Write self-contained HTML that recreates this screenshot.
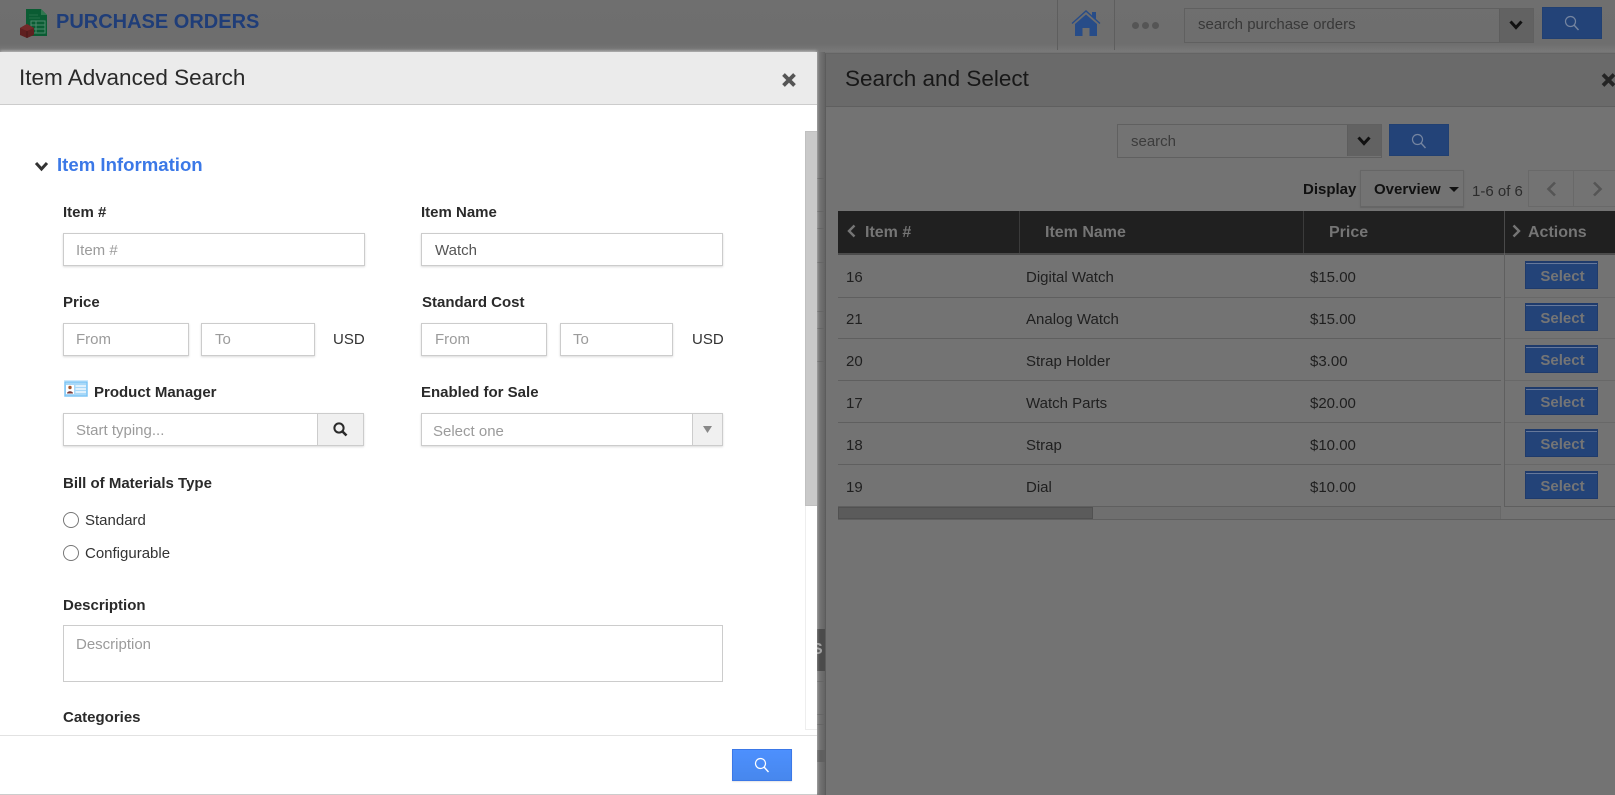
<!DOCTYPE html>
<html><head><meta charset="utf-8"><title>Item Advanced Search</title>
<style>
*{box-sizing:border-box}
html,body{margin:0;padding:0;width:1615px;height:795px;overflow:hidden;background:#737373;font-family:"Liberation Sans",sans-serif}
.a{position:absolute}
.t{position:absolute;white-space:nowrap;line-height:20px;font-size:15px;color:#1f1f1f}
.l{font-weight:bold;color:#2a2a2a}
.p{color:#9b9b9b;font-size:15px}
.i{position:absolute;background:#fff;border:1px solid #ccc;box-shadow:0 1px 2px rgba(0,0,0,.15)}
.d{position:absolute;border:1px solid #606060}
.btn{position:absolute;background:#234378;border:1px solid #214072}
.sel{position:absolute;left:1525px;width:73px;height:28px;background:#234378;border:1px solid #1f3b6c;box-shadow:inset 0 1px 0 #1f3b6c,inset 0 2px 0 #66789a;color:#757575;font:bold 15px/30px "Liberation Sans",sans-serif;text-align:center;padding-left:2px}
.ln{position:absolute;height:1px;background:#5f5f5f}
.h{position:absolute;white-space:nowrap;color:#757575;font:bold 16px/20px "Liberation Sans",sans-serif}
.r{position:absolute;width:16px;height:16px;border:1px solid #777;border-radius:50%;background:#fff}
svg{position:absolute;overflow:visible}
</style></head><body>

<!-- top bar -->
<div class="a" style="left:0;top:0;width:1615px;height:52px;background:linear-gradient(#6f6f6f 0,#6e6e6e 44px,#787878 51px)"></div>
<svg style="left:20px;top:9px" width="28" height="29" viewBox="0 0 28 29">
<path d="M6 0H21L27 6V27H6Z" fill="#0a5c33"/><path d="M21 0L27 6H21Z" fill="#30774f"/>
<path d="M9 9H20M9 6H18" stroke="#277048" stroke-width="1"/>
<path d="M11 12H25V24H11ZM11 16H25M11 20H25M16 12V24" stroke="#4f8a6d" stroke-width="1" fill="none"/>
<path d="M7 15L14 19V26L7 29L0 26V19Z" fill="#5f2020"/><path d="M0 19L7 22L14 19L7 15Z" fill="#722929"/><path d="M7 22V29" stroke="#471717"/>
</svg>
<div class="t" style="left:56px;top:12px;font:bold 20px/20px 'Liberation Sans',sans-serif;color:#1f3d78">PURCHASE ORDERS</div>
<div class="a" style="left:1057px;top:0;width:1px;height:50px;background:#5e5e5e"></div>
<div class="a" style="left:1114px;top:0;width:1px;height:50px;background:#5e5e5e"></div>
<svg style="left:1072px;top:10px" width="28" height="27" viewBox="0 0 28 27">
<path d="M0 13.5L14 1L28 13.5" fill="none" stroke="#274c88" stroke-width="1.4"/>
<path d="M20 2H24V9L20 6Z" fill="#274c88"/>
<path d="M3 14L14 4.5L25 14V26H17.5V18H10.5V26H3Z" fill="#274c88"/></svg>
<div class="a" style="left:1132px;top:22px;width:7px;height:7px;border-radius:50%;background:#555"></div>
<div class="a" style="left:1142px;top:22px;width:7px;height:7px;border-radius:50%;background:#555"></div>
<div class="a" style="left:1152px;top:22px;width:7px;height:7px;border-radius:50%;background:#555"></div>
<div class="d" style="left:1184px;top:8px;width:350px;height:35px"></div>
<div class="a" style="left:1499px;top:9px;width:34px;height:33px;background:#626262;border-left:1px solid #5d5d5d"></div>
<svg style="left:1509px;top:20px" width="14" height="10"><path d="M1.5 1.5L7 7.5L12.5 1.5" fill="none" stroke="#111" stroke-width="3"/></svg>
<div class="t" style="left:1198px;top:15px;color:#383838">search purchase orders</div>
<div class="btn" style="left:1542px;top:7px;width:60px;height:32px"></div>
<svg style="left:1564px;top:15px" width="16" height="16" viewBox="0 0 16 16"><circle cx="6.5" cy="6.5" r="5" fill="none" stroke="#7585a0" stroke-width="1.2"/><path d="M10 10L14.5 15" stroke="#7585a0" stroke-width="1.4"/></svg>

<!-- right panel -->
<div class="a" style="left:825px;top:53px;width:790px;height:742px;background:#737373;border-left:1px solid #5c5c5c;border-top:1px solid #646464"></div>
<div class="a" style="left:826px;top:54px;width:789px;height:53px;background:#6a6a6a;border-bottom:1px solid #5f5f5f"></div>
<div class="t" style="left:845px;top:67px;font-size:22.5px;line-height:24px;color:#181818">Search and Select</div>
<svg style="left:1601px;top:73px" width="15" height="14"><path d="M2 1.5L13 12.5M13 1.5L2 12.5" stroke="#242424" stroke-width="3.8"/></svg>

<div class="d" style="left:1117px;top:124px;width:265px;height:34px"></div>
<div class="a" style="left:1347px;top:125px;width:34px;height:31px;background:#626262;border-left:1px solid #5d5d5d"></div>
<svg style="left:1357px;top:136px" width="14" height="10"><path d="M1.5 1.5L7 7.5L12.5 1.5" fill="none" stroke="#111" stroke-width="3"/></svg>
<div class="t" style="left:1131px;top:132px;color:#3c3c3c">search</div>
<div class="btn" style="left:1389px;top:124px;width:60px;height:32px"></div>
<svg style="left:1411px;top:133px" width="16" height="16" viewBox="0 0 16 16"><circle cx="6.5" cy="6.5" r="5" fill="none" stroke="#7585a0" stroke-width="1.2"/><path d="M10 10L14.5 15" stroke="#7585a0" stroke-width="1.4"/></svg>

<div class="t" style="left:1303px;top:180px;font-weight:bold;color:#111">Display</div>
<div class="d" style="left:1360px;top:170px;width:104px;height:37px;box-shadow:0 1px 1px #636363;border-color:#666"></div>
<div class="t" style="left:1374px;top:180px;font-weight:bold;color:#111">Overview</div>
<svg style="left:1449px;top:187px" width="10" height="6"><path d="M0 0H10L5 5Z" fill="#111"/></svg>
<div class="t" style="left:1472px;top:182px;color:#2c2c2c">1-6 of 6</div>
<div class="d" style="left:1528px;top:170px;width:46px;height:37px;border-color:#696969"></div>
<div class="d" style="left:1573px;top:170px;width:44px;height:37px;border-color:#696969"></div>
<svg style="left:1546px;top:181px" width="11" height="16"><path d="M9 1.5L2.5 8L9 14.5" fill="none" stroke="#555" stroke-width="2.6"/></svg>
<svg style="left:1592px;top:181px" width="11" height="16"><path d="M2 1.5L8.5 8L2 14.5" fill="none" stroke="#555" stroke-width="2.6"/></svg>

<div class="a" style="left:838px;top:211px;width:777px;height:44px;background:#202020;border-bottom:2px solid #4c4c4c"></div>
<div class="a" style="left:1019px;top:211px;width:1px;height:42px;background:#3b3b3b"></div>
<div class="a" style="left:1303px;top:211px;width:1px;height:42px;background:#3b3b3b"></div>
<div class="a" style="left:1504px;top:211px;width:1px;height:42px;background:#4a4a4a"></div>
<svg style="left:847px;top:224px" width="9" height="14"><path d="M7.5 1.5L2 7L7.5 12.5" fill="none" stroke="#757575" stroke-width="2.4"/></svg>
<svg style="left:1512px;top:224px" width="9" height="14"><path d="M1.5 1.5L7 7L1.5 12.5" fill="none" stroke="#757575" stroke-width="2.4"/></svg>
<div class="h" style="left:865px;top:223px">Item #</div>
<div class="h" style="left:1045px;top:223px">Item Name</div>
<div class="h" style="left:1329px;top:223px">Price</div>
<div class="h" style="left:1528px;top:223px">Actions</div>

<div class="ln" style="left:838px;top:297px;width:663px"></div>
<div class="ln" style="left:838px;top:338px;width:663px"></div>
<div class="ln" style="left:838px;top:380px;width:663px"></div>
<div class="ln" style="left:838px;top:422px;width:663px"></div>
<div class="ln" style="left:838px;top:464px;width:663px"></div>
<div class="ln" style="left:838px;top:506px;width:663px"></div>
<div class="a" style="left:1504px;top:253px;width:111px;height:254px;border-left:1px solid #5f5f5f;border-bottom:1px solid #5f5f5f"></div>
<div class="ln" style="left:1505px;top:297px;width:110px;background:#686868"></div>
<div class="ln" style="left:1505px;top:338px;width:110px;background:#686868"></div>
<div class="ln" style="left:1505px;top:380px;width:110px;background:#686868"></div>
<div class="ln" style="left:1505px;top:422px;width:110px;background:#686868"></div>
<div class="ln" style="left:1505px;top:464px;width:110px;background:#686868"></div>

<div class="t" style="left:846px;top:268px">16</div><div class="t" style="left:1026px;top:268px">Digital Watch</div><div class="t" style="left:1310px;top:268px">$15.00</div>
<div class="t" style="left:846px;top:310px">21</div><div class="t" style="left:1026px;top:310px">Analog Watch</div><div class="t" style="left:1310px;top:310px">$15.00</div>
<div class="t" style="left:846px;top:352px">20</div><div class="t" style="left:1026px;top:352px">Strap Holder</div><div class="t" style="left:1310px;top:352px">$3.00</div>
<div class="t" style="left:846px;top:394px">17</div><div class="t" style="left:1026px;top:394px">Watch Parts</div><div class="t" style="left:1310px;top:394px">$20.00</div>
<div class="t" style="left:846px;top:436px">18</div><div class="t" style="left:1026px;top:436px">Strap</div><div class="t" style="left:1310px;top:436px">$10.00</div>
<div class="t" style="left:846px;top:478px">19</div><div class="t" style="left:1026px;top:478px">Dial</div><div class="t" style="left:1310px;top:478px">$10.00</div>

<div class="sel" style="top:261px">Select</div>
<div class="sel" style="top:303px">Select</div>
<div class="sel" style="top:345px">Select</div>
<div class="sel" style="top:387px">Select</div>
<div class="sel" style="top:429px">Select</div>
<div class="sel" style="top:471px">Select</div>

<div class="a" style="left:838px;top:507px;width:255px;height:12px;background:#5b5b5b;border:1px solid #515151"></div>
<div class="a" style="left:1093px;top:507px;width:408px;height:12px;background:#6f6f6f;border-right:1px solid #686868"></div>
<div class="ln" style="left:838px;top:519px;width:777px"></div>

<!-- strip behind modal -->
<div class="a" style="left:817px;top:52px;width:8px;height:743px;background:linear-gradient(90deg,#7d7d7d,#636363)"></div>
<div class="ln" style="left:817px;top:178px;width:8px;background:#656565"></div>
<div class="ln" style="left:817px;top:211px;width:8px;background:#656565"></div>
<div class="ln" style="left:817px;top:228px;width:8px;background:#656565"></div>
<div class="ln" style="left:817px;top:262px;width:8px;background:#656565"></div>
<div class="ln" style="left:817px;top:311px;width:8px;background:#656565"></div>
<div class="ln" style="left:817px;top:328px;width:8px;background:#656565"></div>
<div class="ln" style="left:817px;top:361px;width:8px;background:#656565"></div>
<div class="a" style="left:817px;top:629px;width:8px;height:42px;background:#4b4b4b;overflow:hidden"><div style="position:absolute;left:-5px;top:11px;font:bold 16px/20px 'Liberation Sans',sans-serif;color:#a0a0a0">S</div></div>
<div class="ln" style="left:817px;top:681px;width:8px;background:#656565"></div>
<div class="ln" style="left:817px;top:714px;width:8px;background:#656565"></div>
<div class="ln" style="left:817px;top:724px;width:8px;background:#656565"></div>
<div class="a" style="left:817px;top:750px;width:8px;height:12px;background:#5f5f5f"></div>

<!-- modal -->
<div class="a" style="left:0;top:52px;width:817px;height:743px;background:#fff;box-shadow:0 -1px 3px rgba(255,255,255,.55);border-bottom:1px solid #ccc"></div>
<div class="a" style="left:0;top:52px;width:817px;height:53px;background:#ebebeb;border-bottom:1px solid #ccc"></div>
<div class="t" style="left:19px;top:66px;font-size:22.5px;line-height:24px;color:#2a2a2a">Item Advanced Search</div>
<svg style="left:781px;top:73px" width="16" height="14"><path d="M2.5 1.5L13.5 12.5M13.5 1.5L2.5 12.5" stroke="#555" stroke-width="3.8"/></svg>

<div class="a" style="left:805px;top:131px;width:12px;height:599px;background:#fff;border:1px solid #eee;border-right:0"></div>
<div class="a" style="left:805px;top:131px;width:12px;height:375px;background:#c9c9c9;border:1px solid #c0c0c0;border-right:0"></div>

<svg style="left:34px;top:161px" width="15" height="11"><path d="M2 2L7.5 8L13 2" fill="none" stroke="#333" stroke-width="3"/></svg>
<div class="t" style="left:57px;top:155px;font-weight:bold;font-size:18.6px;color:#3b78e7">Item Information</div>

<div class="t l" style="left:63px;top:203px">Item #</div>
<div class="i" style="left:63px;top:233px;width:302px;height:33px"></div>
<div class="t p" style="left:76px;top:241px">Item #</div>
<div class="t l" style="left:421px;top:203px">Item Name</div>
<div class="i" style="left:421px;top:233px;width:302px;height:33px"></div>
<div class="t" style="left:435px;top:241px;color:#555">Watch</div>

<div class="t l" style="left:63px;top:293px">Price</div>
<div class="i" style="left:63px;top:323px;width:126px;height:33px"></div>
<div class="t p" style="left:76px;top:330px">From</div>
<div class="i" style="left:201px;top:323px;width:114px;height:33px"></div>
<div class="t p" style="left:215px;top:330px">To</div>
<div class="t" style="left:333px;top:330px;color:#333">USD</div>

<div class="t l" style="left:422px;top:293px">Standard Cost</div>
<div class="i" style="left:421px;top:323px;width:126px;height:33px"></div>
<div class="t p" style="left:435px;top:330px">From</div>
<div class="i" style="left:560px;top:323px;width:113px;height:33px"></div>
<div class="t p" style="left:573px;top:330px">To</div>
<div class="t" style="left:692px;top:330px;color:#333">USD</div>

<svg style="left:64px;top:380px" width="24" height="17" viewBox="0 0 24 17">
<rect width="24" height="17" fill="#cfe9fb"/><rect y="2" x="1" width="22" height="14" fill="#a8d8f8" stroke="#6fc0f5"/>
<rect x="2" y="5" width="8" height="9" fill="#fff"/><circle cx="6" cy="7.5" r="1.7" fill="#a5562d"/><path d="M3 13.5C3 10.5 9 10.5 9 13.5Z" fill="#7a3d3d"/>
<path d="M11.5 6H22M11.5 9H22M11.5 12H22" stroke="#fff" stroke-width="1.2"/></svg>
<div class="t l" style="left:94px;top:383px">Product Manager</div>
<div class="i" style="left:63px;top:413px;width:301px;height:33px"></div>
<div class="a" style="left:317px;top:414px;width:46px;height:31px;background:#f0f0f0;border-left:1px solid #ccc"></div>
<svg style="left:333px;top:422px" width="15" height="15" viewBox="0 0 15 15"><circle cx="6" cy="6" r="4.6" fill="none" stroke="#2a2a2a" stroke-width="2"/><path d="M9.5 9.5L13.5 13.5" stroke="#2a2a2a" stroke-width="2.6"/></svg>
<div class="t p" style="left:76px;top:421px">Start typing...</div>

<div class="t l" style="left:421px;top:383px">Enabled for Sale</div>
<div class="i" style="left:421px;top:413px;width:302px;height:33px"></div>
<div class="a" style="left:692px;top:414px;width:30px;height:31px;background:#f0f0f0;border-left:1px solid #ccc"></div>
<svg style="left:703px;top:426px" width="9" height="8"><path d="M0 0H9L4.5 7Z" fill="#888"/></svg>
<div class="t p" style="left:433px;top:422px">Select one</div>

<div class="t l" style="left:63px;top:474px">Bill of Materials Type</div>
<div class="r" style="left:63px;top:512px"></div>
<div class="t" style="left:85px;top:511px;color:#333">Standard</div>
<div class="r" style="left:63px;top:545px"></div>
<div class="t" style="left:85px;top:544px;color:#333">Configurable</div>

<div class="t l" style="left:63px;top:596px">Description</div>
<div class="a" style="left:63px;top:625px;width:660px;height:57px;border:1px solid #ccc;background:#fff"></div>
<div class="t p" style="left:76px;top:635px">Description</div>
<div class="t l" style="left:63px;top:708px">Categories</div>

<div class="a" style="left:0;top:735px;width:817px;height:59px;background:#fff;border-top:1px solid #e2e2e2"></div>
<div class="a" style="left:732px;top:749px;width:60px;height:32px;background:linear-gradient(#4d90fe,#4787ed);border:1px solid #3b78e7;box-shadow:0 1px 1px rgba(0,0,0,.1)"></div>
<svg style="left:754px;top:757px" width="16" height="16" viewBox="0 0 16 16"><circle cx="6.5" cy="6.5" r="5" fill="none" stroke="#fff" stroke-width="1.2"/><path d="M10 10L14.5 15" stroke="#fff" stroke-width="1.4"/></svg>
</body></html>
